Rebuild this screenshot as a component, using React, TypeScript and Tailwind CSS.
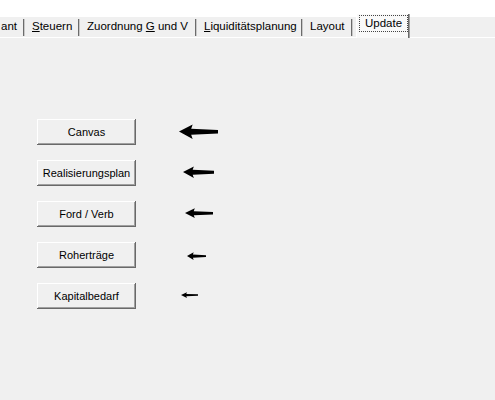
import React from "react";

type Tab = { label: React.ReactNode; w: string };

const tabs: Tab[] = [
  { label: "ant", w: "w-[25px]" },
  {
    label: (
      <>
        <span className="underline">S</span>teuern
      </>
    ),
    w: "w-[55px]",
  },
  {
    label: (
      <>
        Zuordnung <span className="underline">G</span> und V
      </>
    ),
    w: "w-[117px]",
  },
  {
    label: (
      <>
        <span className="underline">L</span>iquiditätsplanung
      </>
    ),
    w: "w-[106px]",
  },
  { label: "Layout", w: "w-[50px]" },
];

type Row = { label: string; ml: string; w: number; h: number; dy: string };

const rows: Row[] = [
  { label: "Canvas", ml: "ml-[43px]", w: 39, h: 15, dy: "-mt-[1px]" },
  { label: "Realisierungsplan", ml: "ml-[47px]", w: 31, h: 12, dy: "-mt-[3px]" },
  { label: "Ford / Verb", ml: "ml-[49px]", w: 28, h: 10, dy: "-mt-[3px]" },
  { label: "Roherträge", ml: "ml-[51px]", w: 19, h: 8, dy: "mt-[1px]" },
  { label: "Kapitalbedarf", ml: "ml-[45px]", w: 17, h: 6, dy: "-mt-[3px]" },
];

const Arrow = ({ w, h }: { w: number; h: number }) => (
  <svg width={w} height={h} viewBox="0 0 40 16" preserveAspectRatio="none" className="overflow-visible">
    <defs>
      <filter id="soft" x="-20%" y="-40%" width="140%" height="180%">
        <feGaussianBlur stdDeviation="0.7" />
      </filter>
    </defs>
    <path d="M0 8 L14 0.5 L12.5 5 L40 6.3 L40 10.2 L12.5 11.5 L14 16 Z" fill="#000" filter="url(#soft)" />
  </svg>
);

const App = () => {
  return (
    <div className="w-[495px] h-[400px] bg-[#f0f0f0] overflow-hidden font-['Liberation_Sans',Arial,sans-serif] text-black">
      <div className="h-[17px] bg-white" />
      <div className="relative h-[21px] flex items-stretch border-b border-white text-[11.5px]">
        {tabs.map((t, i) => (
          <div key={i} className={`${t.w} flex items-center shrink-0`}>
            <span className={`flex-1 whitespace-nowrap ${i === 0 ? "pl-[1px]" : "pl-[7px]"}`}>{t.label}</span>
            <span className="h-[17px] w-[2px] mt-[1px] border-l border-[#6b6b6b] border-r border-r-[#c8c8c8]" />
          </div>
        ))}
        <div className="w-[3px] shrink-0" />
        <div className="-mt-[3px] -mb-[1px] w-[54px] shrink-0 flex bg-[#f9f9f9] border-l border-white">
          <div className="flex-1 pt-[1px] pl-[2px]">
            <div className="h-[17px] w-[49px] border border-dotted border-[#444] flex items-center justify-center">
              Update
            </div>
          </div>
          <span className="w-[2px] border-l border-[#6b6b6b] border-r border-r-[#a0a0a0]" />
        </div>
      </div>
      <div className="pt-[81px] pl-[37px] flex flex-col gap-[15px]">
        {rows.map(r => (
          <div key={r.label} className="flex items-center">
            <button className="w-[99px] h-[26px] bg-[#f0f0f0] text-[11px] shadow-[inset_-1px_-1px_0_#696969,inset_1px_1px_0_#ffffff,inset_-2px_-2px_0_#a0a0a0] font-['Liberation_Sans',Arial,sans-serif]">
              {r.label}
            </button>
            <div className={`${r.ml} ${r.dy} flex`}>
              <Arrow w={r.w} h={r.h} />
            </div>
          </div>
        ))}
      </div>
    </div>
  );
};

export default App;
